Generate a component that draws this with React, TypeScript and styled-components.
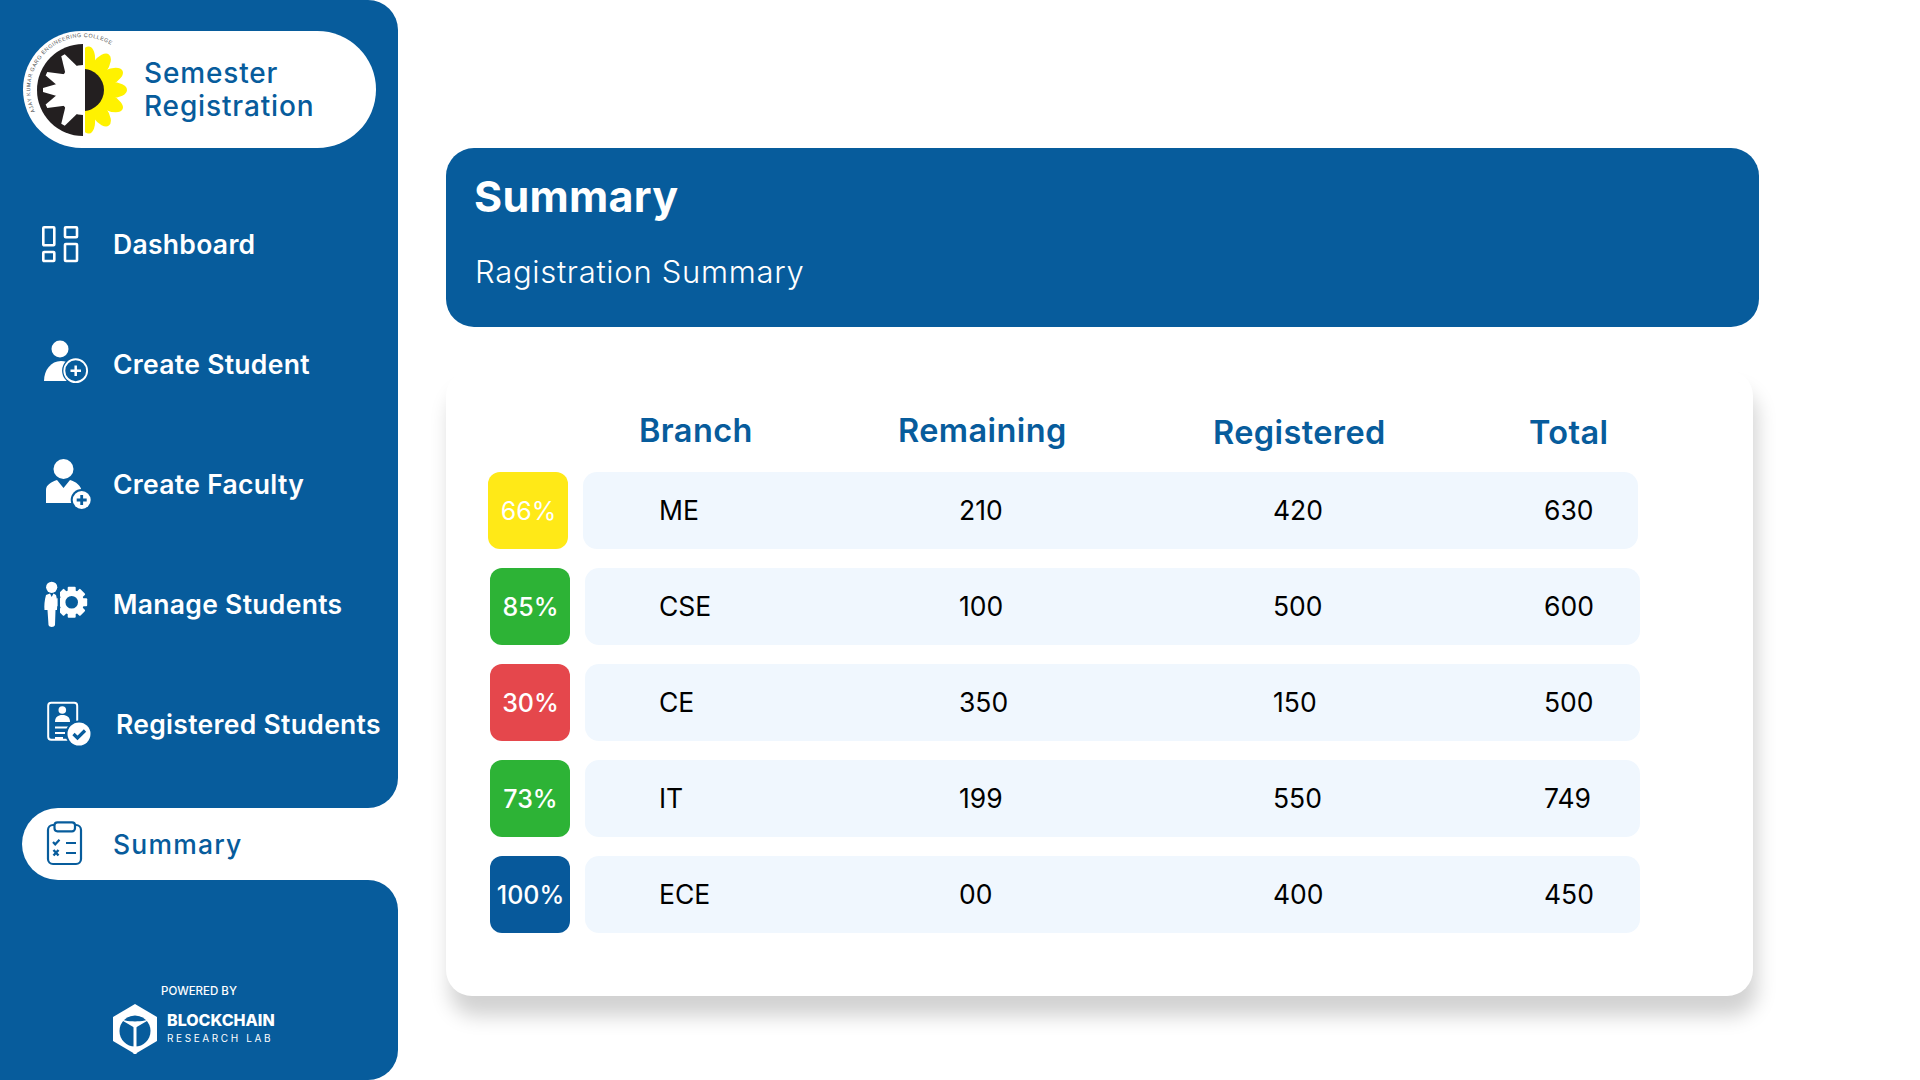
import React from "react";
import styled, { createGlobalStyle } from "styled-components";

const BLUE = "#075C9C";

const Global = createGlobalStyle`
  html, body { margin: 0; padding: 0; background: #fff; }
  body { font-family: Inter, "Liberation Sans", sans-serif; }
  * { box-sizing: border-box; }
`;

const Page = styled.div`
  display: flex;
  width: 1920px;
  height: 1080px;
  overflow: hidden;
  background: #fff;
`;

const Sidebar = styled.aside`
  display: flex;
  flex-direction: column;
  width: 398px;
  height: 1080px;
  flex: none;
`;

const TopPanel = styled.div`
  height: 808px;
  padding-top: 31px;
  background: ${BLUE};
  border-radius: 0 30px 30px 0;
`;

const BrandPill = styled.div`
  display: flex;
  align-items: center;
  gap: 7px;
  width: 353px;
  height: 117px;
  margin: 0 0 36px 23px;
  padding-left: 4px;
  background: #fff;
  border-radius: 59px;
`;

const BrandTitle = styled.div`
  margin-top: 1px;
  color: ${BLUE};
  font-size: 28px;
  font-weight: 500;
  line-height: 33px;
  letter-spacing: 0.85px;
`;

const MenuRow = styled.div`
  display: flex;
  align-items: center;
  height: 120px;
  padding-left: 42px;
`;

const IconSlot = styled.svg`
  width: 48px;
  height: 48px;
  flex: none;
  overflow: visible;
`;

const MenuLabel = styled.span<{ $gap?: number; $active?: boolean }>`
  margin-left: ${(p) => p.$gap ?? 23}px;
  padding-bottom: 1px;
  color: ${(p) => (p.$active ? BLUE : "#fff")};
  font-size: 26.5px;
  font-weight: ${(p) => (p.$active ? 500 : 600)};
  line-height: 30px;
  letter-spacing: ${(p) => (p.$active ? 1.2 : 0.3)}px;
  white-space: nowrap;
`;

const ActiveBand = styled.div`
  height: 72px;
  padding-left: 22px;
  background: ${BLUE};
`;

const ActivePill = styled(MenuRow)`
  height: 72px;
  padding-left: 20px;
  background: #fff;
  border-radius: 36px 0 0 36px;
`;

const BottomPanel = styled.div`
  display: flex;
  flex-direction: column;
  align-items: center;
  height: 200px;
  padding-top: 104px;
  background: ${BLUE};
  border-radius: 0 30px 30px 0;
`;

const PoweredBy = styled.div`
  color: #fff;
  font-size: 11.5px;
  font-weight: 500;
  line-height: 14px;
`;

const LabRow = styled.div`
  display: flex;
  align-items: center;
  gap: 9px;
  align-self: flex-start;
  margin: 6px 0 0 112px;
`;

const LabText = styled.div`
  display: flex;
  flex-direction: column;
  gap: 4px;
  color: #fff;
  margin-top: -3px;
`;

const LabName = styled.div`
  font-size: 16px;
  font-weight: 800;
  line-height: 17px;
`;

const LabSub = styled.div`
  font-size: 10px;
  font-weight: 400;
  line-height: 11px;
  letter-spacing: 2.6px;
`;

const Main = styled.main`
  display: flex;
  flex-direction: column;
  align-items: flex-start;
  padding: 148px 0 0 48px;
`;

const TitleCard = styled.section`
  width: 1313px;
  height: 179px;
  padding: 22px 0 0 28px;
  background: ${BLUE};
  border-radius: 28px;
  color: #fff;
`;

const PageTitle = styled.h1`
  margin: 0;
  font-size: 43px;
  font-weight: 700;
  line-height: 52px;
  letter-spacing: 0.3px;
`;

const PageSubtitle = styled.p`
  margin: 32px 0 0 1px;
  font-size: 31px;
  font-weight: 300;
  line-height: 36px;
  letter-spacing: 0.7px;
`;

const TableCard = styled.section`
  width: 1307px;
  height: 626px;
  margin-top: 43px;
  padding: 42px 0 0 44px;
  background: #fff;
  border-radius: 26px;
  box-shadow: 4px 20px 20px rgba(0, 0, 0, 0.18);
`;

const HeaderRow = styled.div`
  display: grid;
  grid-template-columns: 259px 315px 316px auto;
  height: 60px;
  padding-left: 149px;
`;

const HeaderCell = styled.div<{ $low?: boolean }>`
  margin-top: ${(p) => (p.$low ? 2 : 0)}px;
  color: ${BLUE};
  font-size: 32.5px;
  font-weight: 600;
  line-height: 38px;
  letter-spacing: 0.4px;
`;

const Rows = styled.div`
  display: flex;
  flex-direction: column;
  gap: 19px;
`;

const Row = styled.div<{ $first?: boolean }>`
  display: flex;
  gap: 15px;
  height: 77px;
  margin-left: ${(p) => (p.$first ? -2 : 0)}px;
`;

const Badge = styled.div<{ $color: string; $light?: boolean }>`
  display: flex;
  align-items: center;
  justify-content: center;
  width: 80px;
  height: 77px;
  padding-left: 1px;
  background: ${(p) => p.$color};
  border-radius: 12px;
  color: #fff;
  font-size: 25px;
  font-weight: ${(p) => (p.$light ? 400 : 500)};
`;

const Panel = styled.div<{ $first?: boolean }>`
  display: grid;
  grid-template-columns: 300px 314px 271px auto;
  align-items: center;
  width: 1055px;
  padding-left: ${(p) => (p.$first ? 76 : 74)}px;
  padding-bottom: 1px;
  background: #f0f7fe;
  border-radius: 14px;
`;

const Cell = styled.div`
  color: #000;
  font-size: 26.5px;
  font-weight: 400;
  line-height: 32px;
`;

const DashboardIcon = () => (
  <IconSlot viewBox="0 0 48 48" fill="none" stroke="#fff" strokeWidth="2.6">
    <rect x="1.3" y="7.3" width="11" height="18" rx="0.8" />
    <rect x="23" y="7.3" width="12" height="10" rx="0.8" />
    <rect x="1.3" y="32" width="11" height="9" rx="0.8" />
    <rect x="23" y="24" width="12" height="17" rx="0.8" />
  </IconSlot>
);

const CreateStudentIcon = () => (
  <IconSlot viewBox="0 0 48 48">
    <circle cx="18" cy="9" r="8.5" fill="#fff" />
    <path d="M2 41 C2 30 9 21 19 21 C27 21 32 26 34 32 L30 41 Z" fill="#fff" />
    <circle cx="33.7" cy="30.7" r="13.6" fill={BLUE} />
    <circle cx="33.7" cy="30.7" r="11.4" fill={BLUE} stroke="#fff" strokeWidth="1.9" />
    <path d="M33.7 25.5 V36 M28.5 30.7 H39" stroke="#fff" strokeWidth="2.5" />
  </IconSlot>
);

const CreateFacultyIcon = () => (
  <IconSlot viewBox="0 0 48 48">
    <circle cx="21.5" cy="9" r="10" fill="#fff" />
    <path d="M4 43 V30 C4 25 9 22 15 20 L21.5 28 L28 20 C34 22 39 25 40 32 L30 43 Z" fill="#fff" />
    <circle cx="39.7" cy="40" r="11" fill={BLUE} />
    <circle cx="39.7" cy="40" r="9" fill="#fff" />
    <path d="M39.7 35 V45 M34.7 40 H44.7" stroke={BLUE} strokeWidth="2.8" />
  </IconSlot>
);

const ManageIcon = () => (
  <IconSlot viewBox="0 0 48 48">
    <circle cx="9.7" cy="7.3" r="5.6" fill="#fff" />
    <path d="M4 15 L8 13.5 L9.7 17 L11.5 13.5 L14 15 C15.5 20 15.5 27 15 30 L13.5 30 L13 45 C12.5 47.5 7 47.5 6.5 45 L5.5 30 L2.5 30 C2 26 2.5 20 4 15 Z" fill="#fff" />
    <g fill="#fff">
      {[0, 45, 90, 135, 180, 225, 270, 315].map((a) => (
        <rect key={a} x="25.7" y="6.8" width="8" height="8" rx="1" transform={`rotate(${a} 29.7 22.3)`} />
      ))}
    </g>
    <circle cx="29.7" cy="22.3" r="9.3" fill="none" stroke="#fff" strokeWidth="6" />
    <rect x="15.6" y="8" width="2.4" height="32" fill={BLUE} />
  </IconSlot>
);

const RegisteredIcon = () => (
  <IconSlot viewBox="0 0 48 48">
    <rect x="6.2" y="2.7" width="29" height="37" rx="3" fill="none" stroke="#fff" strokeWidth="2" />
    <circle cx="20.3" cy="10" r="3.8" fill="#fff" />
    <path d="M13 22 C13 17 16 15 20.3 15 C25 15 28 17 28 22 Z" fill="#fff" />
    <path d="M13 27.5 H26 M13 33 H23 M13 38 H21" stroke="#fff" strokeWidth="2" />
    <circle cx="37" cy="34" r="13.5" fill={BLUE} />
    <circle cx="37" cy="34" r="11.5" fill="#fff" />
    <path d="M31.5 34 L35.5 38 L43 30.5" fill="none" stroke={BLUE} strokeWidth="3.2" />
  </IconSlot>
);

const SummaryIcon = () => (
  <IconSlot viewBox="0 0 48 48" fill="none" stroke={BLUE}>
    <rect x="6" y="5" width="33" height="39" rx="5" strokeWidth="2.2" />
    <rect x="12.5" y="2.3" width="20.5" height="9" rx="3" fill="#fff" strokeWidth="2.2" />
    <path d="M11 22 L13.2 24.3 L17.5 19.8" strokeWidth="2.2" />
    <path d="M11.5 30 L16.5 35.5 M16.5 30 L11.5 35.5" strokeWidth="2.4" />
    <path d="M24 23 H34 M24 33 H34" strokeWidth="2.2" />
  </IconSlot>
);

const spokes = [-60, -24, 0, 24, 60];
const petals = [-82, -54, -26, 0, 26, 54, 82];

const CollegeLogo = () => (
  <svg width="110" height="110" viewBox="0 0 110 110" style={{ flex: "none", overflow: "visible" }}>
    <defs>
      <clipPath id="rightHalf">
        <rect x="58" y="0" width="60" height="110" />
      </clipPath>
      <clipPath id="leftHalf">
        <rect x="0" y="0" width="56" height="110" />
      </clipPath>
      <path id="collegeArc" d="M8 77 A53 53 0 0 1 96 20" fill="none" />
    </defs>
    <g clipPath="url(#leftHalf)">
      <circle cx="56" cy="55" r="46" fill="#231f20" />
      <circle cx="56" cy="55" r="25" fill="#fff" />
      {spokes.map((a) => (
        <polygon
          key={a}
          points="40,46 16,53 16,57 40,64"
          fill="#fff"
          transform={`rotate(${a} 56 55)`}
        />
      ))}
    </g>
    <g clipPath="url(#rightHalf)" fill="#fff200">
      {petals.map((a) => (
        <ellipse key={a} cx="84" cy="55" rx="16" ry="8" transform={`rotate(${a} 56 55)`} />
      ))}
    </g>
    <g clipPath="url(#rightHalf)">
      <circle cx="56" cy="55" r="21" fill="#231f20" />
    </g>
    <text fontFamily="Liberation Sans, sans-serif" fontSize="5.4" letterSpacing="0.5" fill="#555">
      <textPath href="#collegeArc">AJAY KUMAR GARG ENGINEERING COLLEGE</textPath>
    </text>
  </svg>
);

const LabLogo = () => (
  <svg width="46" height="50" viewBox="0 0 46 50" style={{ flex: "none" }}>
    <polygon points="23,0 45,13 45,37 23,50 1,37 1,13" fill="#fff" />
    <circle cx="23" cy="27" r="15.5" fill={BLUE} />
    <path d="M23 22 V50" stroke="#fff" strokeWidth="3" fill="none" />
    <path d="M23 24 L6 14 C13 18.5 33 18.5 40 14 Z" fill="#fff" />
  </svg>
);

const rows = [
  { pct: "66%", color: "#FFE917", light: true, branch: "ME", rem: "210", reg: "420", total: "630" },
  { pct: "85%", color: "#2DB336", branch: "CSE", rem: "100", reg: "500", total: "600" },
  { pct: "30%", color: "#E5474C", branch: "CE", rem: "350", reg: "150", total: "500" },
  { pct: "73%", color: "#2DB336", branch: "IT", rem: "199", reg: "550", total: "749" },
  { pct: "100%", color: "#07599B", branch: "ECE", rem: "00", reg: "400", total: "450" },
];

export default function App() {
  return (
    <Page>
      <Global />
      <Sidebar>
        <TopPanel>
          <BrandPill>
            <CollegeLogo />
            <BrandTitle>
              Semester
              <br />
              Registration
            </BrandTitle>
          </BrandPill>
          <MenuRow>
            <DashboardIcon />
            <MenuLabel>Dashboard</MenuLabel>
          </MenuRow>
          <MenuRow>
            <CreateStudentIcon />
            <MenuLabel>Create Student</MenuLabel>
          </MenuRow>
          <MenuRow>
            <CreateFacultyIcon />
            <MenuLabel>Create Faculty</MenuLabel>
          </MenuRow>
          <MenuRow>
            <ManageIcon />
            <MenuLabel>Manage Students</MenuLabel>
          </MenuRow>
          <MenuRow>
            <RegisteredIcon />
            <MenuLabel $gap={26}>Registered Students</MenuLabel>
          </MenuRow>
        </TopPanel>
        <ActiveBand>
          <ActivePill>
            <SummaryIcon />
            <MenuLabel $active>Summary</MenuLabel>
          </ActivePill>
        </ActiveBand>
        <BottomPanel>
          <PoweredBy>POWERED BY</PoweredBy>
          <LabRow>
            <LabLogo />
            <LabText>
              <LabName>BLOCKCHAIN</LabName>
              <LabSub>RESEARCH LAB</LabSub>
            </LabText>
          </LabRow>
        </BottomPanel>
      </Sidebar>
      <Main>
        <TitleCard>
          <PageTitle>Summary</PageTitle>
          <PageSubtitle>Ragistration Summary</PageSubtitle>
        </TitleCard>
        <TableCard>
          <HeaderRow>
            <HeaderCell>Branch</HeaderCell>
            <HeaderCell>Remaining</HeaderCell>
            <HeaderCell $low>Registered</HeaderCell>
            <HeaderCell $low>Total</HeaderCell>
          </HeaderRow>
          <Rows>
            {rows.map((r, i) => (
              <Row key={r.branch} $first={i === 0}>
                <Badge $color={r.color} $light={r.light}>
                  {r.pct}
                </Badge>
                <Panel $first={i === 0}>
                  <Cell>{r.branch}</Cell>
                  <Cell>{r.rem}</Cell>
                  <Cell>{r.reg}</Cell>
                  <Cell>{r.total}</Cell>
                </Panel>
              </Row>
            ))}
          </Rows>
        </TableCard>
      </Main>
    </Page>
  );
}
